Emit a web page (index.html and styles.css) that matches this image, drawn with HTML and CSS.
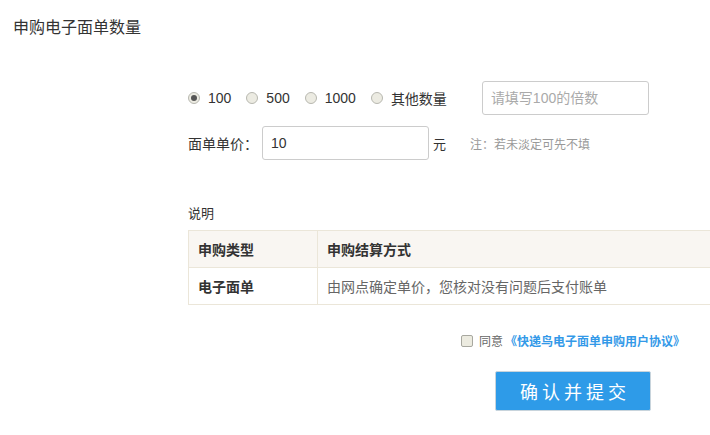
FILE: index.html
```html
<!DOCTYPE html>
<html lang="zh-CN">
<head>
<meta charset="utf-8">
<title>申购电子面单数量</title>
<link rel="stylesheet" href="styles.css">
</head>
<body>
<div class="page">
  <h1 class="title">申购电子面单数量</h1>
  <div class="form">
    <div class="row row-qty">
      <label class="opt"><span class="radio checked"></span><span class="opt-text">100</span></label>
      <label class="opt"><span class="radio"></span><span class="opt-text">500</span></label>
      <label class="opt"><span class="radio"></span><span class="opt-text">1000</span></label>
      <label class="opt opt-last"><span class="radio"></span><span class="opt-text">其他数量</span></label>
      <input class="field field-qty" type="text" placeholder="请填写100的倍数">
    </div>
    <div class="row row-price">
      <span class="label">面单单价：</span>
      <input class="field field-price" type="text" value="10">
      <span class="unit">元</span>
      <span class="note">注：若未淡定可先不填</span>
    </div>
    <div class="desc-title">说明</div>
    <div class="desc-wrap">
      <table class="desc">
        <tr class="head">
          <th class="c1">申购类型</th>
          <th class="c2">申购结算方式</th>
        </tr>
        <tr>
          <th class="c1">电子面单</th>
          <td class="c2">由网点确定单价，您核对没有问题后支付账单</td>
        </tr>
      </table>
    </div>
    <div class="agree">
      <span class="check"></span>
      <span class="agree-text">同意</span>
      <a class="agree-link" href="#">《快递鸟电子面单申购用户协议》</a>
    </div>
    <button class="submit" type="button">确认并提交</button>
  </div>
</div>
</body>
</html>
```
FILE: styles.css
```css
html, body {
  margin: 0;
  padding: 0;
  background: #fff;
  overflow: hidden;
}
body {
  font-family: "Liberation Sans", "Noto Sans CJK SC", sans-serif;
  color: #333;
  width: 710px;
  height: 435px;
}
.page {
  padding: 16px 0 0 13px;
}
.title {
  margin: 0;
  font-size: 16px;
  font-weight: normal;
  line-height: 23px;
  color: #333;
}
.form {
  margin: 42px 0 0 175px;
}
.row {
  display: flex;
  align-items: center;
}
.opt {
  display: flex;
  align-items: center;
  margin-right: 15px;
  font-size: 14px;
  color: #333;
}
.opt-last {
  margin-right: 34px;
}
.radio {
  width: 10px;
  height: 10px;
  border: 1px solid #b8b8b0;
  border-radius: 50%;
  background: #ecebe2;
  margin-right: 8px;
  position: relative;
}
.radio.checked::after {
  content: "";
  position: absolute;
  left: 2px;
  top: 2px;
  width: 6px;
  height: 6px;
  border-radius: 50%;
  background: #555;
}
.field {
  box-sizing: border-box;
  height: 34px;
  border: 1px solid #ccc;
  border-radius: 3px;
  padding: 0 8px;
  font-family: inherit;
  font-size: 14px;
  color: #333;
  outline: none;
}
.field::placeholder {
  color: #aaa;
}
.field-qty {
  width: 167px;
  margin-left: 1px;
}
.row-price {
  margin-top: 11px;
}
.label {
  font-size: 14px;
  color: #333;
  width: 74px;
}
.field-price {
  width: 167px;
}
.unit {
  font-size: 13px;
  margin-left: 4px;
}
.note {
  font-size: 12px;
  color: #999;
  margin-left: 24px;
}
.desc-title {
  margin-top: 44px;
  font-size: 13px;
  line-height: 20px;
  color: #333;
}
.desc-wrap {
  margin-top: 6px;
  width: 522px;
  overflow: hidden;
}
.desc {
  width: 540px;
  border-collapse: collapse;
  font-size: 14px;
}
.desc th, .desc td {
  border: 1px solid #ebe6d9;
  height: 36px;
  padding: 0 0 0 9px;
  text-align: left;
}
.desc th {
  font-weight: bold;
  color: #333;
}
.desc td {
  color: #666;
}
.desc .c1 {
  width: 119px;
}
.desc .head th {
  background: #f9f6f2;
}
.agree {
  display: flex;
  align-items: center;
  margin: 27px 0 0 273px;
  font-size: 12px;
}
.check {
  width: 10px;
  height: 10px;
  border: 1px solid #a8a8a0;
  border-radius: 2px;
  background: #ecebe0;
  margin-right: 6px;
}
.agree-text {
  color: #666;
}
.agree-link {
  color: #3399e8;
  text-decoration: none;
  font-weight: bold;
  margin-left: 2px;
}
.submit {
  display: block;
  margin: 22px 0 0 307px;
  width: 156px;
  height: 40px;
  background: #2e9be8;
  border: 1px solid #c8d4dc;
  border-radius: 2px;
  color: #fff;
  font-family: "Noto Sans CJK SC", sans-serif;
  font-size: 18px;
  letter-spacing: 4px;
  padding: 0 0 0 4px;
}
```
